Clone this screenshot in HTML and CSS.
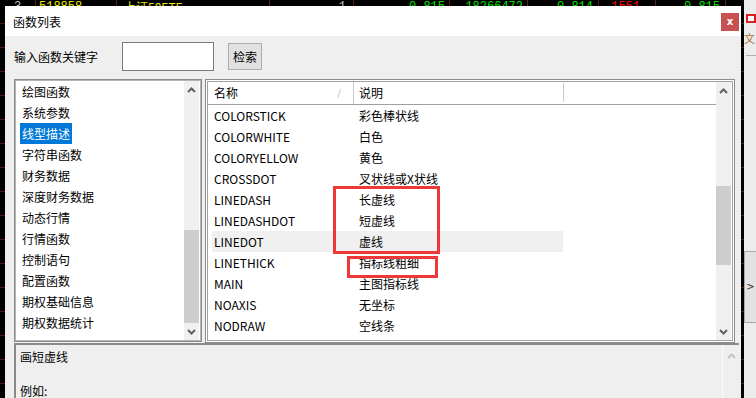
FILE: index.html
```html
<!DOCTYPE html>
<html lang="zh-CN">

<head>
    <meta charset="UTF-8">
    <title>函数列表</title>
    <link rel="stylesheet" href="styles.css">
</head>

<body>
    <!-- quote row behind the dialog -->
    <div class="quotes">
        <span class="q q-no">3</span>
        <span class="q q-code">518858</span>
        <span class="q q-name">上证50ETF</span>
        <span class="q q-vol">1</span>
        <span class="q q-price">0.815</span>
        <span class="q q-amt">18266472</span>
        <span class="q q-bid">0.814</span>
        <span class="q q-red">1551</span>
        <span class="q q-ask">0.815</span>
    </div>

    <div class="dialog">
        <div class="titlebar">
            <span class="title">函数列表</span>
            <button class="close">x</button>
        </div>

        <div class="dlg-body">
            <!-- search -->
            <div class="search">
                <label class="search-label" for="kw">输入函数关键字</label>
                <input class="search-input" id="kw" type="text">
                <button class="search-btn">检索</button>
            </div>

            <div class="panels">
                <!-- categories -->
                <div class="cat-panel">
                    <ul class="cat-list">
                        <li><span>绘图函数</span></li>
                        <li><span>系统参数</span></li>
                        <li class="selected"><span>线型描述</span></li>
                        <li><span>字符串函数</span></li>
                        <li><span>财务数据</span></li>
                        <li><span>深度财务数据</span></li>
                        <li><span>动态行情</span></li>
                        <li><span>行情函数</span></li>
                        <li><span>控制语句</span></li>
                        <li><span>配置函数</span></li>
                        <li><span>期权基础信息</span></li>
                        <li><span>期权数据统计</span></li>
                    </ul>
                    <div class="vscroll cat-scroll">
                        <div class="arrow"><svg width="9" height="6" viewBox="0 0 9 6"><polyline points="1,5 4.5,1.5 8,5" /></svg></div>
                        <div class="track"><div class="thumb"></div></div>
                        <div class="arrow"><svg width="9" height="6" viewBox="0 0 9 6"><polyline points="1,1 4.5,4.5 8,1" /></svg></div>
                    </div>
                </div>

                <!-- functions -->
                <div class="fn-panel">
                    <div class="fn-main">
                        <div class="fn-head">
                            <div class="hcell hcell-name"><span>名称</span><span class="sort">/</span></div>
                            <div class="hcell hcell-desc">说明</div>
                            <div class="hcell hcell-rest"></div>
                        </div>
                        <div class="fn-rows">
                            <div class="row"><span class="c-name">COLORSTICK</span><span class="c-desc">彩色棒状线</span></div>
                            <div class="row"><span class="c-name">COLORWHITE</span><span class="c-desc">白色</span></div>
                            <div class="row"><span class="c-name">COLORYELLOW</span><span class="c-desc">黄色</span></div>
                            <div class="row"><span class="c-name">CROSSDOT</span><span class="c-desc">叉状线或X状线</span></div>
                            <div class="row"><span class="c-name">LINEDASH</span><span class="c-desc">长虚线</span></div>
                            <div class="row"><span class="c-name">LINEDASHDOT</span><span class="c-desc">短虚线</span></div>
                            <div class="row hover"><span class="c-name">LINEDOT</span><span class="c-desc">虚线</span></div>
                            <div class="row"><span class="c-name">LINETHICK</span><span class="c-desc">指标线粗细</span></div>
                            <div class="row"><span class="c-name">MAIN</span><span class="c-desc">主图指标线</span></div>
                            <div class="row"><span class="c-name">NOAXIS</span><span class="c-desc">无坐标</span></div>
                            <div class="row"><span class="c-name">NODRAW</span><span class="c-desc">空线条</span></div>
                        </div>
                    </div>
                    <div class="vscroll fn-scroll">
                        <div class="arrow"><svg width="9" height="6" viewBox="0 0 9 6"><polyline points="1,5 4.5,1.5 8,5" /></svg></div>
                        <div class="track"><div class="thumb"></div></div>
                        <div class="arrow"><svg width="9" height="6" viewBox="0 0 9 6"><polyline points="1,1 4.5,4.5 8,1" /></svg></div>
                    </div>

                    <!-- red annotation boxes -->
                    <div class="mark mark-a"></div>
                    <div class="mark mark-b"></div>
                </div>
            </div>

            <!-- description -->
            <div class="desc">
                <div class="desc-text">画短虚线<br><br>例如:</div>
                <div class="desc-scroll">
                    <svg width="9" height="6" viewBox="0 0 9 6"><polyline points="1,5 4.5,1.5 8,5" /></svg>
                </div>
            </div>
        </div>
    </div>

    <!-- edge of the next window -->
    <div class="side">
        <div class="side-icon side-icon-red"></div>
        <div class="side-icon side-icon-txt">文</div>
        <div class="side-line"></div>
        <div class="side-tab">&gt;</div>
    </div>
</body>

</html>
```

FILE: styles.css
```css
* {
    box-sizing: border-box;
}

body {
    margin: 0;
    width: 756px;
    height: 398px;
    overflow: hidden;
    position: relative;
    background-color: #000;
    background-image: repeating-linear-gradient(to bottom, transparent 0, transparent 23px, #4a1a12 23px, #4a1a12 24px);
    font-family: "Noto Sans CJK SC", "Noto Sans", sans-serif;
    font-size: 12px;
    color: #000;
}

/* quote row */
.quotes {
    display: flex;
    height: 16px;
    font-family: "Liberation Mono", monospace;
    font-size: 12px;
    line-height: 12px;
    background: #000;
}

.q {
    display: block;
    padding-top: 1px;
    border-right: 1px solid #5a1e14;
    text-align: right;
    color: #00e000;
}

.q-no { width: 36px; text-align: center; color: #c0c0c0; }
.q-code { width: 81px; text-align: left; padding-left: 3px; color: #e8e800; }
.q-name { width: 153px; text-align: left; padding-left: 7px; color: #e8e800; font-family: "Noto Sans CJK SC", sans-serif; }
.q-vol { width: 84px; padding-right: 7px; color: #c0c0c0; }
.q-price { width: 96px; padding-right: 4px; }
.q-amt { width: 78px; padding-right: 4px; }
.q-bid { width: 71px; padding-right: 5px; }
.q-red { width: 57px; padding-right: 15px; color: #ff0000; }
.q-ask { width: 70px; padding-right: 5px; }

/* dialog window */
.dialog {
    position: absolute;
    left: 5px;
    top: 6px;
    width: 736px;
    height: 392px;
    background: #efefef;
    overflow: hidden;
}

.titlebar {
    height: 30px;
    background: #fff;
    display: flex;
    align-items: center;
    justify-content: space-between;
    padding-left: 8px;
}

.close {
    width: 18px;
    height: 18px;
    margin-right: 2px;
    margin-top: 1px;
    border: none;
    padding: 0;
    background: #c75050;
    color: #fff;
    font-family: "DejaVu Sans", sans-serif;
    font-weight: bold;
    font-size: 10px;
    line-height: 18px;
}

.dlg-body {
    padding: 0 2px 0 9px;
}

/* search */
.search {
    height: 43px;
    display: flex;
    align-items: flex-start;
    padding-top: 6px;
}

.search-label {
    width: 108px;
    line-height: 29px;
}

.search-input {
    width: 92px;
    height: 29px;
    border: 1px solid #7a7a7a;
    background: #fff;
    margin: 0;
}

.search-btn {
    margin: 1px 0 0 14px;
    width: 34px;
    height: 27px;
    padding: 0;
    border: 1px solid #adadad;
    background: #e1e1e1;
    font-family: inherit;
    font-size: 12px;
    color: #000;
}

/* panels */
.panels {
    display: flex;
    gap: 3px;
    height: 264px;
}

.cat-panel {
    width: 188px;
    height: 263px;
    display: flex;
    background: #fff;
    border: 1px solid #8c8c8c;
    padding: 1px 2px 1px 1px;
    box-shadow: inset 1px 1px 0 0 #b4b4b4, inset -1px -1px 0 0 #b4b4b4;
}

.cat-list {
    flex: 1;
    list-style: none;
    margin: 0;
    padding: 0 0 0 4px;
}

.cat-list li {
    height: 21px;
    line-height: 21px;
}

.cat-list span {
    display: inline-block;
    padding: 0 2px;
}

.cat-list .selected span {
    background: #0078d7;
    color: #fff;
}

.vscroll {
    width: 15px;
    display: flex;
    flex-direction: column;
    background: #f0f0f0;
}

.vscroll .arrow {
    height: 17px;
    display: flex;
    align-items: center;
    justify-content: center;
}

.vscroll svg polyline,
.desc-scroll svg polyline {
    fill: none;
    stroke: #606060;
    stroke-width: 2;
}

.vscroll .track {
    flex: 1;
}

.cat-scroll .track {
    padding-top: 132px;
}

.cat-scroll .thumb {
    height: 93px;
    background: #cdcdcd;
}

.fn-panel {
    position: relative;
    width: 530px;
    display: flex;
    background: #fff;
    border: 1px solid #8c8c8c;
    padding: 2px 2px 2px 2px;
    box-shadow: inset 0 0 0 1px #fff, inset 0 0 0 2px #a0a0a0;
}

.fn-main {
    flex: 1;
}

.fn-head {
    display: flex;
    height: 23px;
    border-bottom: 1px solid #a0a0a0;
    line-height: 22px;
}

.hcell-name {
    width: 145px;
    padding: 0 12px 0 6px;
    display: flex;
    justify-content: space-between;
}

.sort {
    color: #a8a8a8;
    font-size: 9px;
}

.hcell-desc {
    width: 210px;
    padding-left: 5px;
    border-left: 1px solid #c8c8c8;
}

.hcell-rest {
    flex: 1;
    border-left: 1px solid #c8c8c8;
    margin: 1px 0 2px;
}

.fn-rows {
    padding-left: 4px;
}

.row {
    width: 351px;
    height: 21px;
    line-height: 21px;
    display: flex;
}

.row.hover {
    background: #f0f0f0;
}

.c-name {
    width: 147px;
    padding-left: 2px;
}

.fn-scroll {
    margin-right: 1px;
}

.fn-scroll .track {
    padding-top: 87px;
}

.fn-scroll .thumb {
    height: 79px;
    background: #cdcdcd;
}

.mark {
    position: absolute;
    border: 3px solid #ee3838;
}

.mark-a {
    left: 127px;
    top: 106px;
    width: 107px;
    height: 68px;
}

.mark-b {
    left: 141px;
    top: 176px;
    width: 91px;
    height: 22px;
}

/* description */
.desc {
    display: flex;
    height: 60px;
    border-top: 2px solid #8a8a8a;
    border-left: 2px solid #8a8a8a;
}

.desc-text {
    flex: 1;
    padding: 3px 0 0 4px;
    line-height: 17px;
}

.desc-scroll {
    width: 17px;
    border-left: 1px solid #fafafa;
    display: flex;
    justify-content: center;
    padding-top: 8px;
}

.desc-scroll svg polyline {
    stroke: #c4c4c4;
}

/* next window edge */
.side {
    position: absolute;
    left: 744px;
    top: 0;
    width: 12px;
    height: 398px;
    background: #ececec;
}

.side-icon-red {
    margin: 14px 0 0 2px;
    width: 10px;
    height: 9px;
    border: 2px solid #d82020;
    background: #fff;
}

.side-icon-txt {
    margin-top: 8px;
    height: 14px;
    line-height: 14px;
    color: #b07030;
    font-size: 11px;
}

.side-line {
    margin: 10px 0 0 2px;
    height: 1px;
    background: #b0b0b0;
}

.side-tab {
    margin-top: 195px;
    height: 72px;
    border: 1px solid #a8a8a8;
    border-right: none;
    background: #e2e2e2;
    line-height: 70px;
    text-align: center;
    font-family: "DejaVu Sans", sans-serif;
    font-size: 10px;
    color: #333;
}
```
